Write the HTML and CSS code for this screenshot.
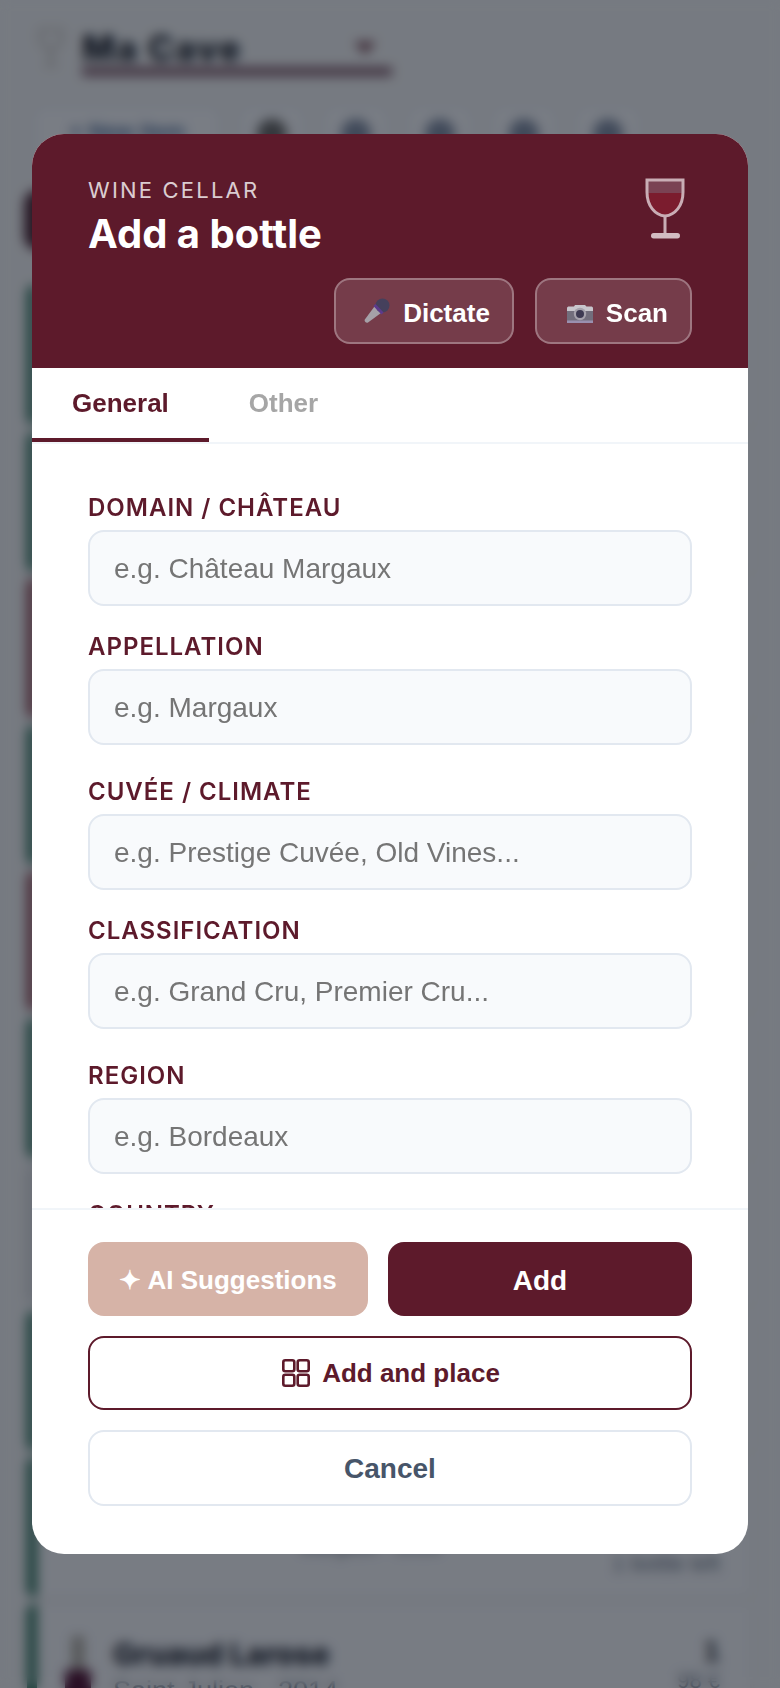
FILE: index.html
```html
<!DOCTYPE html>
<html lang="en">
<head>
<meta charset="utf-8">
<title>Add a bottle</title>
<link rel="stylesheet" href="styles.css">
</head>
<body>
<div class="app">
  <header class="app-head">
    <svg class="app-glass" viewBox="0 0 26 40" width="26" height="40"><path d="M2 2h22v8c0 7-5 11-11 11S2 17 2 10zM13 21v15M6 37h14" fill="none" stroke="#c4c0bc" stroke-width="3"/></svg>
    <div class="cellar-select"><span class="cellar-name">Ma Cave</span><span class="cellar-arrow"></span></div>
  </header>
  <div class="toolbar">
    <div class="tool tool-wide"><span class="tool-text">+ New item</span></div>
    <div class="tool"><span class="tool-dot tool-dot-dark"></span></div>
    <div class="tool"><span class="tool-dot"></span></div>
    <div class="tool"><span class="tool-dot"></span></div>
    <div class="tool"><span class="tool-dot"></span></div>
    <div class="tool"><span class="tool-dot"></span></div>
  </div>
  <div class="filter-bar"></div>
  <div class="list">
    <div class="card card-green"></div>
    <div class="card card-green"></div>
    <div class="card card-red"></div>
    <div class="card card-green"></div>
    <div class="card card-red"></div>
    <div class="card card-green"></div>
    <div class="card"></div>
    <div class="card card-green"></div>
    <div class="card card-green">
      <div class="card-main"></div>
      <div class="card-meta"><span class="meta-left">Margaux · 2016</span><span class="meta-right">1 bottle left</span></div>
    </div>
    <div class="card card-green">
      <div class="card-main">
        <div class="bottle"><span class="bottle-neck"></span><span class="bottle-body"></span></div>
        <div class="card-text">
          <div class="card-title">Gruaud Larose</div>
          <div class="card-sub">Saint-Julien · 2014</div>
        </div>
        <div class="card-side"><div class="card-count">1</div><div class="card-price">98 €</div></div>
      </div>
    </div>
  </div>
</div>

<div class="overlay">
  <div class="modal">
    <div class="modal-head">
      <div class="head-top">
        <div>
          <div class="eyebrow">WINE CELLAR</div>
          <h1 class="modal-title">Add a bottle</h1>
        </div>
        <svg class="head-glass" viewBox="0 0 40 62" width="40" height="62">
          <path d="M2 15H38C37 28 30 37 20 38C10 37 3 28 2 15Z" fill="#7b1c2e"/>
          <path d="M2 2H38V15H2Z" fill="#7a4253"/>
          <path d="M2 2H38V14C38 28 30 37 20 38C10 37 2 28 2 14Z" fill="none" stroke="#c9adb5" stroke-width="3"/>
          <path d="M20 38V56" stroke="#c9adb5" stroke-width="3"/>
          <rect x="6" y="55" width="29" height="5.5" rx="2.7" fill="#d2bcc2"/>
        </svg>
      </div>
      <div class="head-actions">
        <button class="ghost-btn" type="button">
          <svg class="ghost-icon" viewBox="0 0 26 26" width="26" height="26">
            <path d="M10.5 8.5L0.8 21.5C-0.2 23 2.2 25.6 4 24.4L17 15Z" fill="#a5a1a8"/>
            <circle cx="18.5" cy="7.5" r="7" fill="#45405c"/>
            <path d="M10.5 7L18.5 15.5" stroke="#5c3a8c" stroke-width="3"/>
          </svg>
          Dictate
        </button>
        <button class="ghost-btn" type="button">
          <svg class="ghost-icon" viewBox="0 0 28 26" width="28" height="26">
            <rect x="2" y="9" width="26" height="16" rx="1" fill="#726e7c"/>
            <path d="M2 10.5C2 9 3 8.5 4 8.5H9L10 7H20L21.5 8.5H26C27 8.5 28 9 28 10.5V13H2Z" fill="#c8c6cc"/>
            <rect x="2" y="22.5" width="26" height="2.5" fill="#9a90b0"/>
            <circle cx="15" cy="16" r="6.2" fill="#a6a2ac"/>
            <circle cx="15" cy="16" r="4" fill="#3e3a52"/>
          </svg>
          Scan
        </button>
      </div>
    </div>
    <div class="tabs">
      <button class="tab tab-active" type="button">General</button>
      <button class="tab" type="button">Other</button>
    </div>
    <div class="form">
      <div class="field"><label class="field-label">DOMAIN / CHÂTEAU</label><input class="field-input" placeholder="e.g. Château Margaux"></div>
      <div class="field field-end"><label class="field-label">APPELLATION</label><input class="field-input" placeholder="e.g. Margaux"></div>
      <div class="field"><label class="field-label">CUVÉE / CLIMATE</label><input class="field-input" placeholder="e.g. Prestige Cuvée, Old Vines..."></div>
      <div class="field field-end"><label class="field-label">CLASSIFICATION</label><input class="field-input" placeholder="e.g. Grand Cru, Premier Cru..."></div>
      <div class="field"><label class="field-label">REGION</label><input class="field-input" placeholder="e.g. Bordeaux"></div>
      <div class="field"><label class="field-label">COUNTRY</label><input class="field-input" placeholder="e.g. France"></div>
    </div>
    <div class="modal-foot">
      <div class="foot-row">
        <button class="btn btn-ai" type="button">✦ AI Suggestions</button>
        <button class="btn btn-primary" type="button">Add</button>
      </div>
      <button class="btn btn-outline" type="button">
        <svg class="grid-icon" viewBox="0 0 28 28" width="28" height="28"><rect x="1.3" y="1.3" width="11" height="11" rx="2"/><rect x="15.7" y="1.3" width="11" height="11" rx="2"/><rect x="1.3" y="15.7" width="11" height="11" rx="2"/><rect x="15.7" y="15.7" width="11" height="11" rx="2"/></svg>
        Add and place
      </button>
      <button class="btn btn-cancel" type="button">Cancel</button>
    </div>
  </div>
</div>
</body>
</html>
```
FILE: styles.css
```css
* { box-sizing: border-box; }
html, body { margin: 0; height: 100%; overflow: hidden; }
body { background: #f1f3f6; font-family: "Liberation Sans", Arial, sans-serif; }

.app { height: 1688px; overflow: hidden; }
.app-head { display: flex; gap: 18px; padding: 28px 0 0 38px; height: 105px; }
.app-glass { flex: none; }
.cellar-select { width: 310px; height: 48px; border-bottom: 9px solid #7e5a6c; display: flex; justify-content: space-between; align-items: center; padding-right: 16px; }
.cellar-name { font: 800 35px Inter, sans-serif; letter-spacing: 1.5px; color: #141a28; }
.cellar-arrow { width: 0; height: 0; border: 11px solid transparent; border-top: 12px solid #74404f; margin-top: 12px; }

.toolbar { display: flex; gap: 16px; padding-left: 32px; height: 60px; }
.tool { width: 68px; height: 60px; border: 2px solid #e0e6f0; background: #f6f8fd; border-radius: 12px; display: flex; justify-content: center; padding-top: 12px; }
.tool-wide { width: 190px; }
.tool-text { font: 700 22px "Liberation Sans", sans-serif; color: #4a6a98; }
.tool-dot { width: 30px; height: 30px; border-radius: 50%; background: #7f8ca4; }
.tool-dot-dark { background: #666; }

.filter-bar { margin: 25px 0 35px 24px; width: 200px; height: 60px; background: #4a2434; border-radius: 14px; }

.list { display: flex; flex-direction: column; gap: 6.5px; padding: 0 30px 0 27px; }
.card { flex: none; height: 140px; background: #f4f6fb; border-radius: 8px; border-left: 10px solid #d2d5da; padding: 32px 30px 0 28px; box-shadow: 0 2px 8px rgba(0,0,0,.06); }
.card-green { border-left-color: #2f7560; }
.card-red { border-left-color: #8e4452; }
.card-main { display: flex; height: 60px; gap: 22px; }
.card-meta { display: flex; justify-content: space-between; align-items: flex-start; margin-top: -13px; padding-left: 235px; }
.meta-left { font-size: 20px; line-height: 20px; color: #6a7688; }
.meta-right { font-size: 22px; line-height: 24px; margin-top: 16px; color: #6a7688; }
.bottle { flex: none; width: 26px; height: 90px; display: flex; flex-direction: column; align-items: center; }
.bottle-neck { flex: none; width: 12px; height: 34px; background: #aba79f; }
.bottle-body { flex: none; width: 26px; height: 60px; background: #4f1034; }
.card-text { flex: 1; }
.card-title { font: 800 30px/36px Inter, sans-serif; color: #1b2230; }
.card-sub { margin-top: 3px; font-size: 27px; line-height: 32px; color: #6a7688; }
.card-side { text-align: right; }
.card-count { font-size: 30px; line-height: 30px; font-weight: 700; color: #2a2f3a; }
.card-price { margin-top: 2px; font-size: 22px; color: #7a8494; }

.overlay { position: fixed; inset: 0; background: rgba(10,15,25,.53); backdrop-filter: blur(6px); display: flex; align-items: center; justify-content: center; }
.modal { width: 716px; height: 1420px; background: #fff; border-radius: 32px; display: flex; flex-direction: column; overflow: hidden; }

.modal-head { flex: none; height: 234px; background: #5d1a2b; padding: 44px 56px 0; }
.head-top { display: flex; justify-content: space-between; height: 100px; }
.eyebrow { font: 400 22px/24px Inter, sans-serif; letter-spacing: 2.2px; color: rgba(255,255,255,.8); }
.modal-title { margin: 9px 0 0; font: 700 40px/46px Inter, sans-serif; color: #fff; }
.head-glass { flex: none; margin-right: 7px; }
.head-actions { display: flex; justify-content: flex-end; gap: 21px; }
.ghost-btn { height: 66px; padding: 4px 22px 0 28px; border: 2px solid rgba(255,255,255,.3); border-radius: 16px; background: rgba(255,255,255,.15); color: #fff; font: 700 26px "Liberation Sans", sans-serif; display: flex; align-items: center; gap: 13px; }
.ghost-icon { flex: none; margin-top: -4px; }

.tabs { flex: none; display: flex; height: 76px; border-bottom: 2px solid #f1f5f9; }
.tab { height: 74px; padding: 0 40px 4px; border: 0; background: none; font: 700 26px "Liberation Sans", sans-serif; color: #a6a6a6; }
.tab-active { color: #5d1a2b; border-bottom: 4px solid #5d1a2b; padding-bottom: 0; }

.form { flex: 1; min-height: 0; overflow: hidden; padding: 49px 56px 0; }
.field { margin-bottom: 26px; }
.field-end { margin-bottom: 32px; }
.field-label { display: block; height: 27px; margin-bottom: 10px; font: 600 24px/29px Inter, sans-serif; letter-spacing: 1px; color: #5d1a2b; }
.field-input { display: block; width: 100%; height: 76px; padding: 2px 24px 0; border: 2px solid #e2e8f0; border-radius: 16px; background: #f8fafc; font: 400 28px "Liberation Sans", sans-serif; }
.field-input::placeholder { color: #757575; opacity: 1; }

.modal-foot { flex: none; border-top: 2px solid #f1f5f9; padding: 32px 56px 48px; display: flex; flex-direction: column; gap: 20px; }
.foot-row { display: grid; grid-template-columns: 280px 304px; gap: 20px; }
.btn { height: 74px; border-radius: 16px; font: 700 26px "Liberation Sans", sans-serif; border: 0; padding: 0; display: flex; align-items: center; justify-content: center; }
.btn-ai { background: #d6b3a7; color: #fff; padding-top: 3px; }
.btn-primary { background: #5d1a2b; color: #fff; font-size: 28px; padding-top: 3px; }
.btn-outline { background: #fff; color: #5d1a2b; border: 2px solid #5d1a2b; gap: 12px; padding-left: 2px; }
.btn-cancel { height: 76px; background: #fff; color: #475569; border: 2px solid #e2e8f0; font-size: 28px; padding-top: 2px; }
.grid-icon { fill: none; stroke: #5d1a2b; stroke-width: 2.6; flex: none; }
```
